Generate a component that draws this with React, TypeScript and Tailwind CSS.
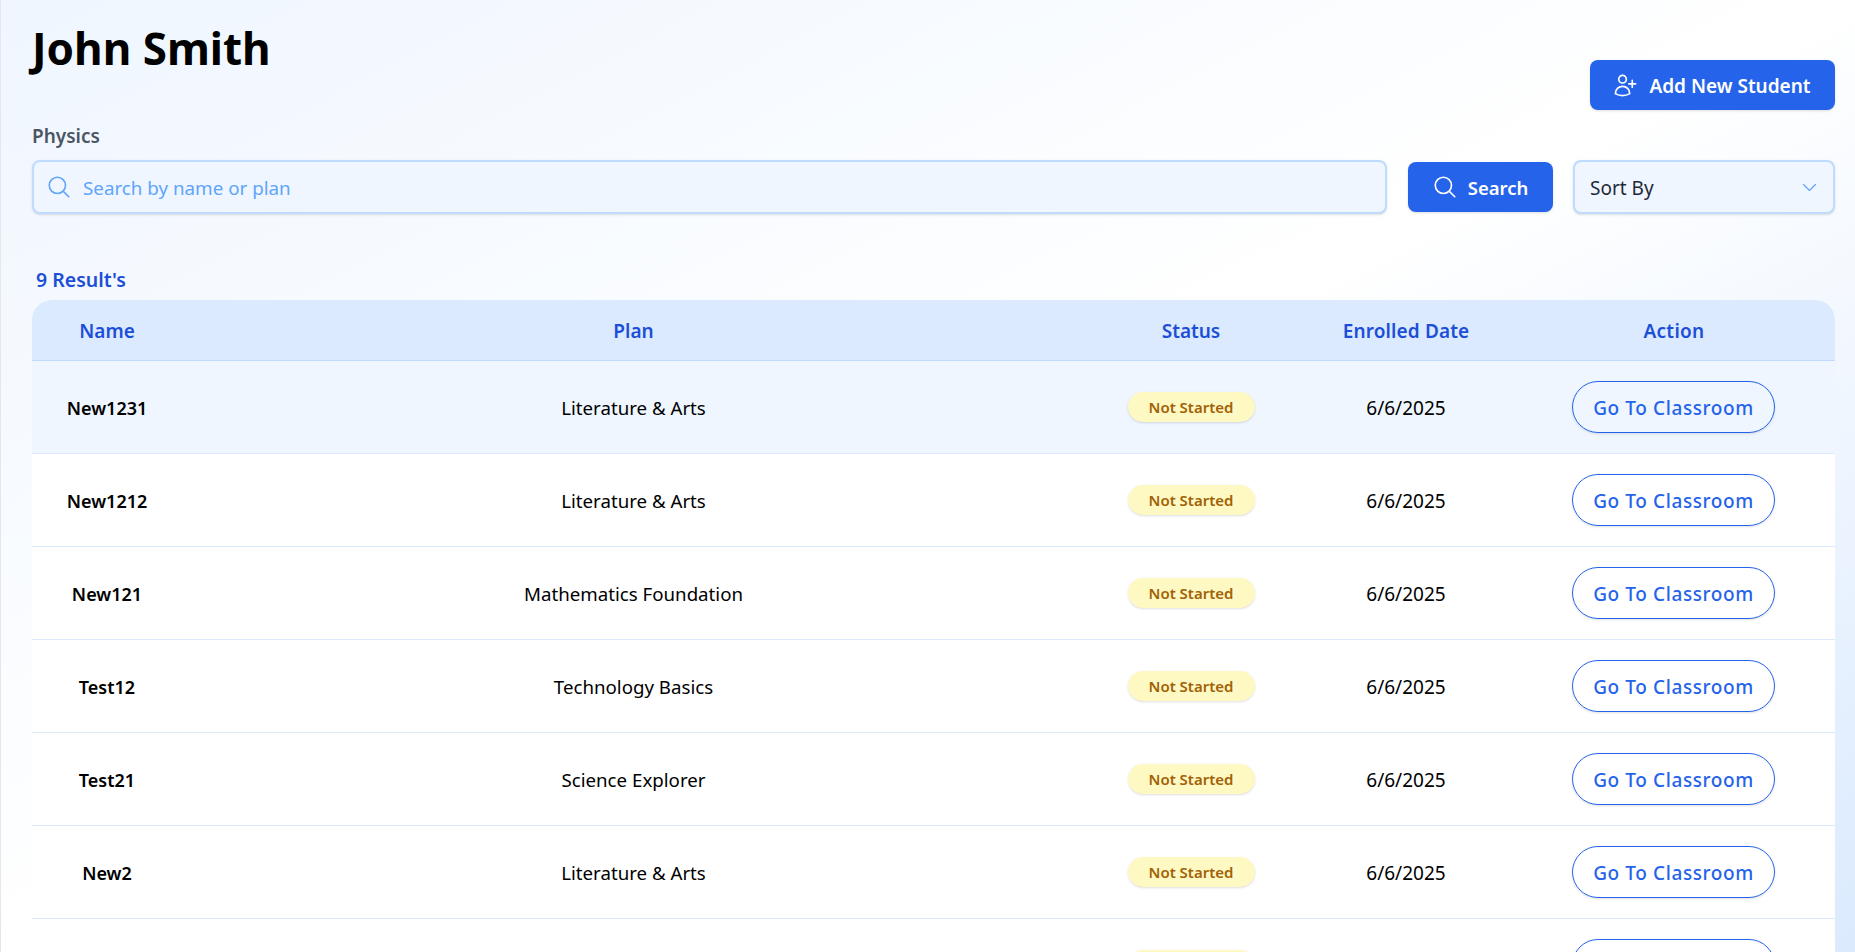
import { HiOutlineChevronDown, HiOutlineMagnifyingGlass, HiOutlineUserPlus } from 'react-icons/hi2'

// last row is cut by the window, only its pill and button outline show
const students = [
  { name: 'New1231', plan: 'Literature & Arts', date: '6/6/2025' },
  { name: 'New1212', plan: 'Literature & Arts', date: '6/6/2025' },
  { name: 'New121', plan: 'Mathematics Foundation', date: '6/6/2025' },
  { name: 'Test12', plan: 'Technology Basics', date: '6/6/2025' },
  { name: 'Test21', plan: 'Science Explorer', date: '6/6/2025' },
  { name: 'New2', plan: 'Literature & Arts', date: '6/6/2025' },
  { name: '', plan: '', date: '' },
]

export default function App() {
  return (
    <div className="h-screen overflow-hidden border-l border-[#e5e7eb] bg-gradient-to-br from-[#eff6ff] via-white to-[#dbeafe] pl-[31px] pr-[20px] font-['Noto_Sans',sans-serif] text-black">
      {/* Header */}
      <div className="flex items-start justify-between pt-[20px]">
        <div>
          <h1 className="text-[44px] font-bold leading-[56px]">John Smith</h1>
          <p className="mt-[48px] text-[19px] font-semibold leading-6 text-[#4b5563]">Physics</p>
        </div>
        <button className="mt-[40px] flex h-[50px] w-[245px] items-center justify-center gap-[10px] rounded-lg bg-[#2563eb] pr-[2px] text-[19px] font-semibold text-white shadow-sm">
          <HiOutlineUserPlus size={27} />
          <span className="pt-[2px]">Add New Student</span>
        </button>
      </div>

      {/* Search row */}
      <div className="mt-[12px] flex items-center">
        <div className="flex h-[54px] flex-1 items-center gap-[9px] rounded-lg border-2 border-[#bfdbfe] bg-[#eff6ff] px-[12px] shadow-sm">
          <HiOutlineMagnifyingGlass size={26} className="shrink-0 text-[#60a5fa]" />
          <span className="pl-[2px] pt-[2px] text-[18.8px] text-[#60a5fa]">Search by name or plan</span>
        </div>
        <button className="ml-[21px] flex h-[50px] w-[145px] items-center justify-center gap-[10px] rounded-lg bg-[#2563eb] pr-[1px] text-[18.5px] font-semibold text-white shadow-sm">
          <HiOutlineMagnifyingGlass size={26} />
          <span className="pt-[2px]">Search</span>
        </button>
        <div className="ml-[20px] flex h-[54px] w-[262px] items-center justify-between rounded-lg border-2 border-[#bfdbfe] bg-[#eff6ff] pl-[15px] pr-[14px] shadow-sm">
          <span className="pt-[2px] text-[19px] text-[#1f2937]">Sort By</span>
          <HiOutlineChevronDown size={19} className="text-[#60a5fa]" />
        </div>
      </div>

      <p className="mt-[54px] pl-[4px] text-[19.5px] font-semibold leading-6 text-[#1d4ed8]">9 Result's</p>

      {/* Students table */}
      <div className="mt-[8px] overflow-hidden rounded-t-[20px] bg-white">
        <table className="w-full table-fixed border-collapse text-center">
          <thead>
            <tr className="h-[60px] border-b border-[#bfdbfe] bg-[#dbeafe] text-[19px] text-[#1d4ed8]">
              <th className="w-[150px] pt-[2px] font-semibold">Name</th>
              <th className="w-[903px] pt-[2px] font-semibold">Plan</th>
              <th className="w-[212px] pt-[2px] font-semibold">Status</th>
              <th className="w-[218px] pt-[2px] font-semibold tracking-[0.12px]">Enrolled Date</th>
              <th className="pr-[2px] pt-[2px] font-semibold tracking-[0.3px]">Action</th>
            </tr>
          </thead>
          <tbody>
            {students.map((s, i) => (
              <tr key={i} className={`h-[93px] border-b border-[#dbeafe] text-[18.7px] ${i === 0 ? 'bg-[#eff6ff]' : 'bg-white'}`}>
                <td className="pt-[2px] text-lg font-semibold">{s.name}</td>
                <td className="pt-[4px]">{s.plan}</td>
                <td>
                  <span className="inline-flex h-[30px] w-[127px] items-center justify-center rounded-full bg-[#fef9c3] pt-[1px] align-middle text-[15px] font-semibold text-[#a16207] shadow-sm">
                    {s.date && 'Not Started'}
                  </span>
                </td>
                <td className="pt-[4px] text-[19px]">{s.date}</td>
                <td className="pr-[3px]">
                  <button className="h-[52px] w-[203px] rounded-full border border-[#2563eb] pt-[3px] align-middle text-[19px] font-medium tracking-[0.6px] text-[#2563eb] shadow-sm">
                    {s.date && 'Go To Classroom'}
                  </button>
                </td>
              </tr>
            ))}
          </tbody>
        </table>
      </div>
    </div>
  )
}
